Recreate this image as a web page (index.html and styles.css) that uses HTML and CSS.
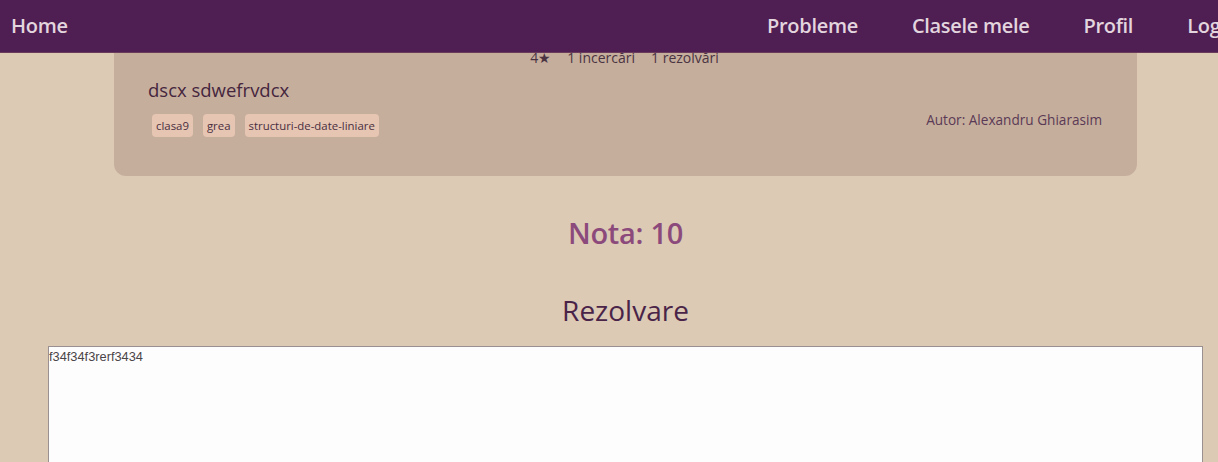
FILE: index.html
```html
<!DOCTYPE html>
<html lang="ro">
<head>
<meta charset="utf-8">
<title>Problema</title>
<link rel="stylesheet" href="styles.css">
</head>
<body>
<nav class="nav">
  <a class="nav-home" href="#">Home</a>
  <div class="nav-links">
    <a href="#">Probleme</a>
    <a href="#">Clasele mele</a>
    <a href="#">Profil</a>
    <a href="#">Logout</a>
  </div>
</nav>
<main class="main">
  <section class="card">
    <div class="stats">
      <span>4★</span>
      <span>1 incercări</span>
      <span>1 rezolvări</span>
    </div>
    <h2 class="title">dscx sdwefrvdcx</h2>
    <div class="card-bottom">
      <div class="tags">
        <span class="tag">clasa9</span>
        <span class="tag">grea</span>
        <span class="tag">structuri-de-date-liniare</span>
      </div>
      <div class="author">Autor: Alexandru Ghiarasim</div>
    </div>
  </section>
  <h1 class="nota">Nota: 10</h1>
  <h2 class="rez">Rezolvare</h2>
  <textarea class="code">f34f34f3rerf3434</textarea>
</main>
</body>
</html>
```
FILE: styles.css
```css
* { box-sizing: border-box; }
html, body { margin: 0; padding: 0; }
body {
  background: #dccab5;
  font-family: "Open Sans", "Noto Sans", sans-serif;
  overflow: hidden;
  height: 462px;
}
.nav {
  position: fixed;
  top: 0; left: 0; right: 0;
  height: 53px;
  background: #4f1e53;
  display: grid;
  grid-template-columns: 756px 1fr;
  align-items: center;
  padding-left: 11px;
  z-index: 10;
  overflow: hidden;
  border-bottom: 1px solid #6b3b5c;
}
.nav a {
  color: #e3d5de;
  text-decoration: none;
  font-size: 20px;
  font-weight: 600;
  letter-spacing: -0.3px;
  white-space: nowrap;
  line-height: 22px;
}
.nav-links {
  display: flex;
  gap: 54px;
}
.main {
  margin-top: -10px;
  padding-left: 33px;
  display: flex;
  flex-direction: column;
  align-items: center;
}
.card {
  width: 1023px;
  background: #c6ae9d;
  border-radius: 12px;
  padding: 59px 34px 39px 34px;
  color: #4a2a40;
}
.stats {
  display: flex;
  justify-content: center;
  gap: 16px;
  font-size: 14px;
  line-height: 18px;
  color: #4a3442;
  margin-right: 2px;
}
.title {
  margin: 11px 0 0 0;
  font-size: 18.5px;
  line-height: 24px;
  font-weight: 400;
  color: #45263d;
}
.card-bottom {
  display: flex;
  justify-content: space-between;
  align-items: flex-start;
  margin-top: 12px;
}
.tags {
  display: flex;
  gap: 10px;
  padding-left: 4px;
}
.tag {
  background: #e6c5b3;
  border-radius: 4px;
  padding: 5px 4px;
  font-size: 11.4px;
  line-height: 13px;
  color: #4a2f40;
}
.author {
  font-size: 13.6px;
  line-height: 18px;
  color: #5a3a55;
  margin-top: -3px;
  margin-right: 1px;
}
.nota {
  margin: 37px 0 0 0;
  font-size: 29px;
  font-weight: 600;
  color: #8b4a7b;
  line-height: 40px;
  letter-spacing: -0.3px;
}
.rez {
  margin: 40px 0 0 0;
  font-size: 28px;
  font-weight: 400;
  color: #4a2448;
  line-height: 34px;
}
.code {
  margin: 19px 0 0 0;
  width: 1155px;
  height: 200px;
  background: #fefdfd;
  border: 1px solid #9a9092;
  font-family: "Liberation Sans", Arial, sans-serif;
  font-size: 12.8px;
  color: #4a4548;
  padding: 2px 0;
  resize: none;
}
```
